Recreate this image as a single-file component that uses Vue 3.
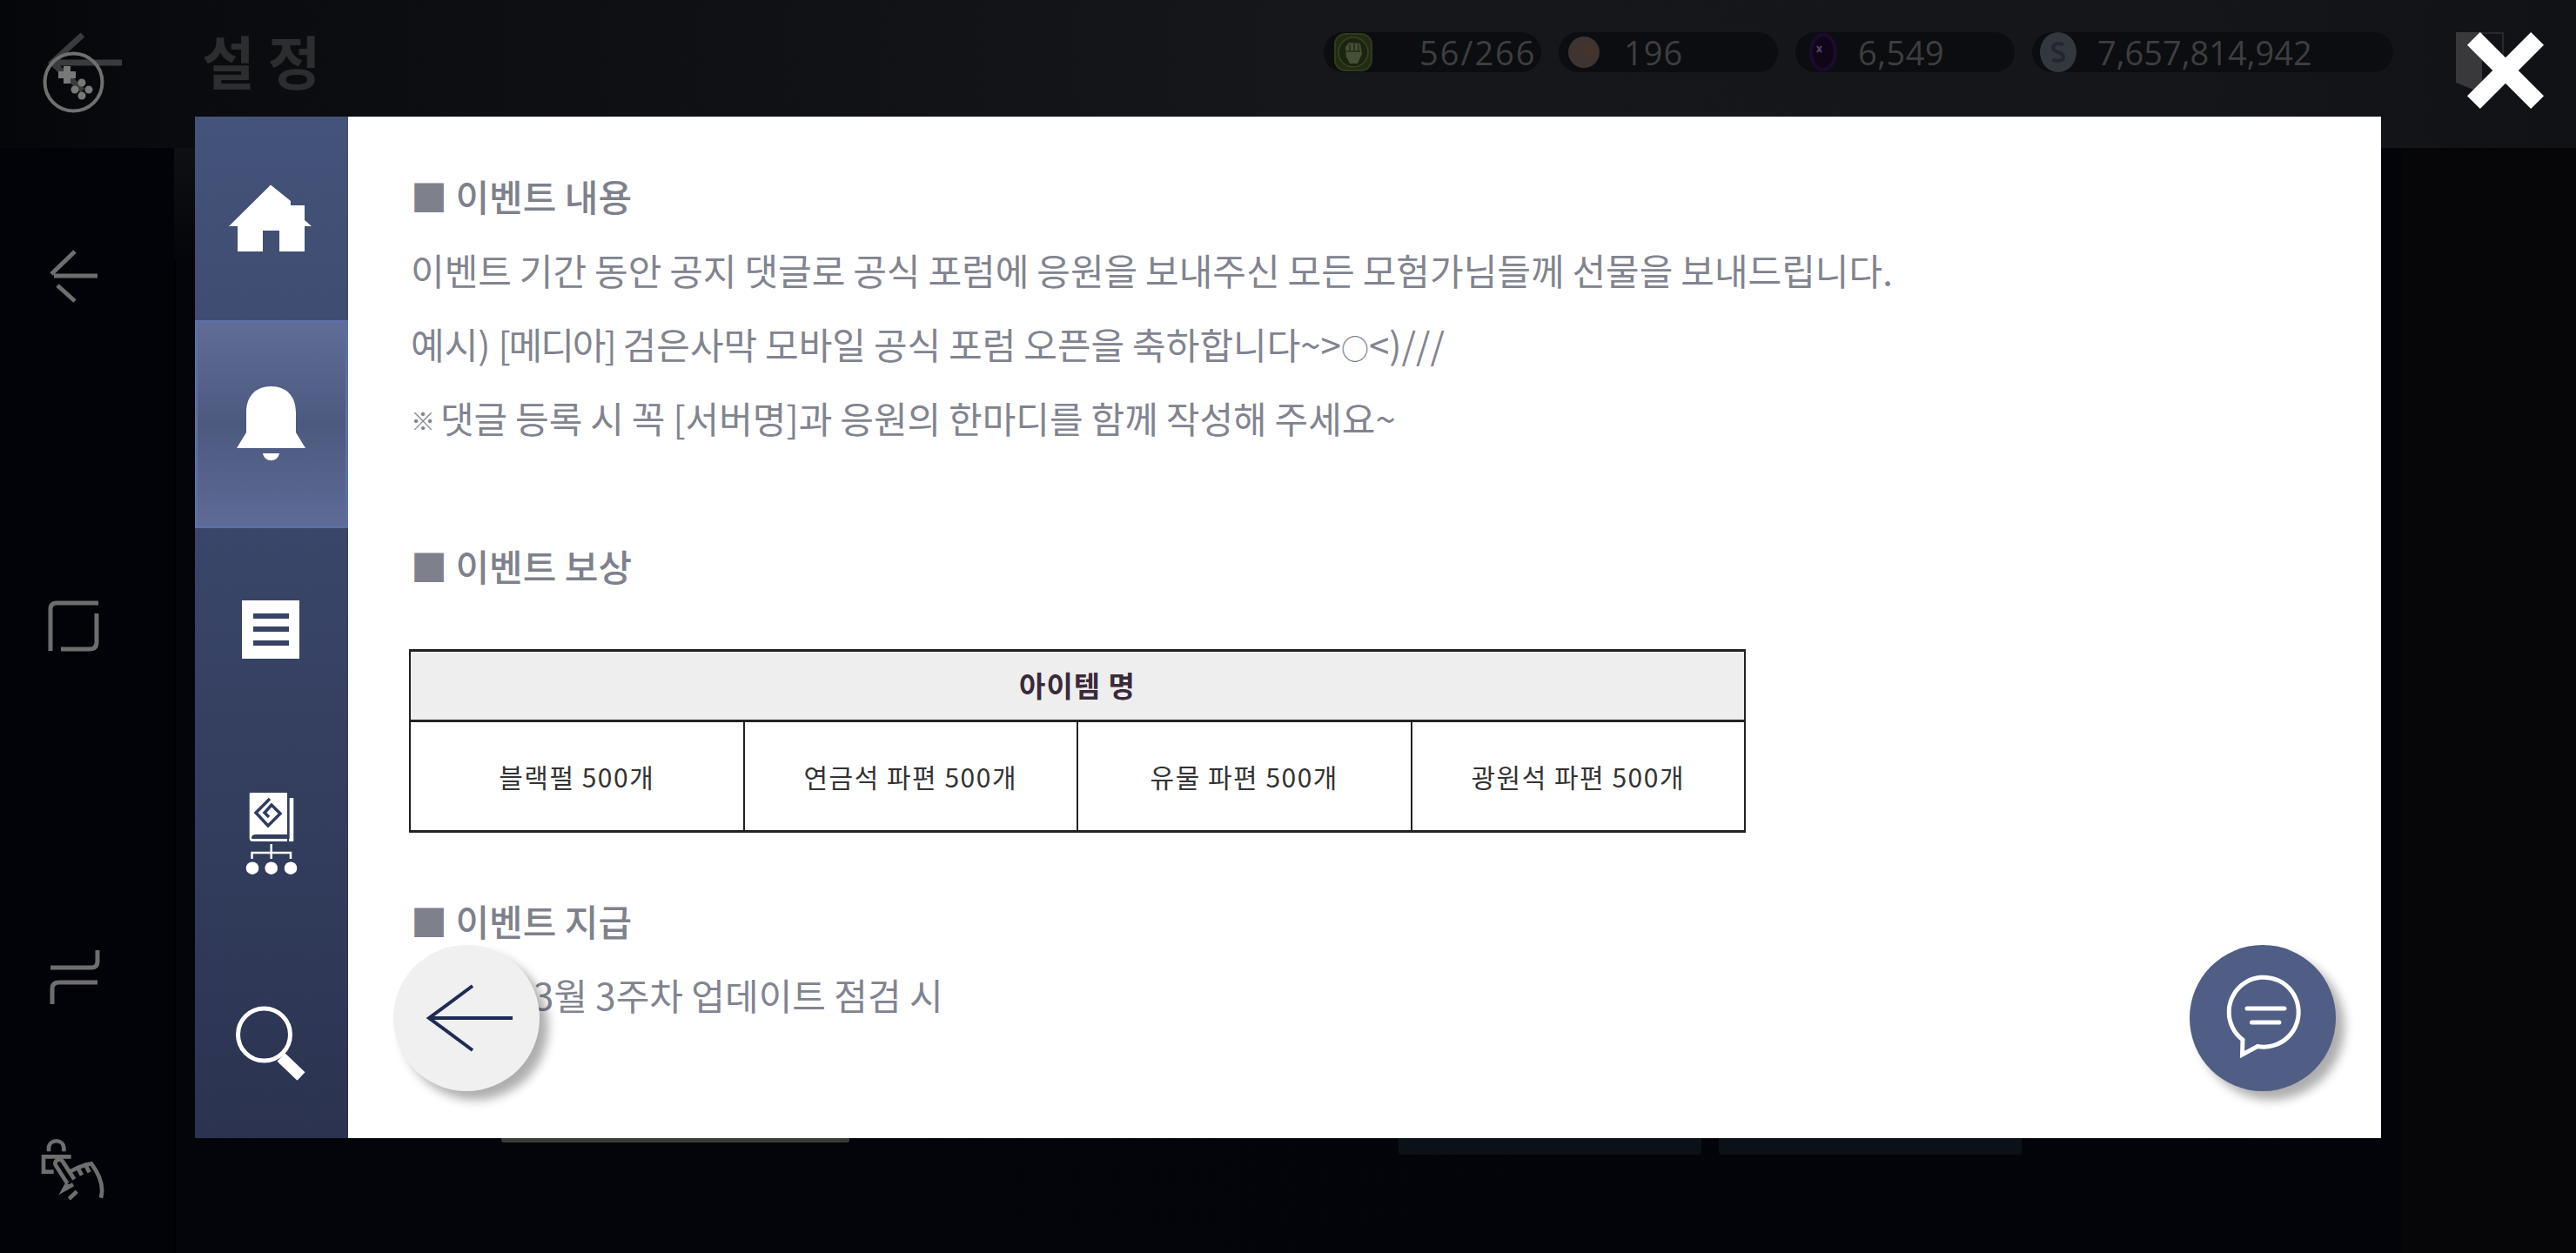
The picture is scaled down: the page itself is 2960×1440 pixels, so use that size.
<script setup>
const pills = [
  { label: '56/266', width: 250, textAt: 110, iconAt: 12, icon: 'fist', spacing: 2 },
  { label: '196', width: 252, textAt: 75, iconAt: 11, icon: 'stone', spacing: 1 },
  { label: '6,549', width: 252, textAt: 72, iconAt: 16, icon: 'orb', spacing: 0.5 },
  { label: '7,657,814,942', width: 415, textAt: 75, iconAt: 9, icon: 'coin', spacing: 0 },
];

const rewards = ['블랙펄 500개', '연금석 파편 500개', '유물 파편 500개', '광원석 파편 500개'];
</script>

<template>
  <div class="screen">
    <!-- dimmed game screen behind the notice -->
    <header class="topbar">
      <svg class="top-back" width="90" height="90" viewBox="0 0 90 90" fill="none">
        <path d="M5 45H85M40 13L5 45L40 77" stroke="#3a3b3d" stroke-width="7" />
      </svg>
      <div class="title">설 정</div>
      <div class="pills">
        <div v-for="p in pills" :key="p.icon" class="pill" :style="{ width: p.width + 'px' }">
          <div class="pill-icon" :style="{ width: p.textAt + 'px', paddingLeft: p.iconAt + 'px' }">
            <svg v-if="p.icon === 'fist'" width="44" height="44" viewBox="0 0 44 44">
              <rect x="1" y="1" width="42" height="42" rx="12" fill="#222b13" stroke="#303b1b" stroke-width="2" />
              <circle cx="22" cy="22" r="17" fill="#1c2410" stroke="#38431f" stroke-width="1.500" />
              <path d="M13 16L17 11L30 12L32 24L27 35H18L14 27Z" fill="#465038" />
              <path d="M18 13V20M23 12V20M28 13V20M14 21H30" stroke="#222b13" stroke-width="1.500" fill="none" />
            </svg>
            <svg v-else-if="p.icon === 'stone'" width="36" height="36" viewBox="0 0 36 36">
              <circle cx="18" cy="18" r="18" fill="#3e3533" />
              <circle cx="23" cy="16" r="8" fill="#47332c" />
            </svg>
            <svg v-else-if="p.icon === 'orb'" width="32" height="44" viewBox="0 0 32 44">
              <ellipse cx="16" cy="22" rx="16" ry="22" fill="#1c0b30" />
              <ellipse cx="16" cy="22" rx="12" ry="18" fill="#100618" />
              <path d="M9 15l5 7M14 15l-5 7" stroke="#5b4470" stroke-width="2" />
            </svg>
            <svg v-else width="42" height="46" viewBox="0 0 42 46">
              <ellipse cx="21" cy="23" rx="21" ry="23" fill="#33383f" />
              <path d="M27 15c-3-3-12-3-12 3s12 4 12 10-9 6-12 3" fill="none" stroke="#23272d" stroke-width="4" />
            </svg>
          </div>
          <span class="pill-text" :style="{ letterSpacing: p.spacing + 'px' }">{{ p.label }}</span>
        </div>
      </div>
      <svg class="bookmark" width="55" height="70" viewBox="0 0 55 70">
        <path d="M0 0H30V70L0 58Z" fill="#39393b" />
        <path d="M30 1H54V50" fill="none" stroke="#29292b" stroke-width="2" />
      </svg>
    </header>

    <main class="body">
      <div class="stub-row">
        <div class="stub-grey"></div>
        <div class="stub-tab first"></div>
        <div class="stub-tab"></div>
      </div>
    </main>

    <!-- device nav rail, sits over the game -->
    <nav class="rail">
      <svg class="rail-btn pad" width="80" height="80" viewBox="0 0 80 80" fill="none">
        <circle cx="39.5" cy="40.5" r="33" stroke="#707070" stroke-width="4" />
        <path d="M32 22V42M22 32H42" stroke="#787878" stroke-width="8" />
        <circle cx="49" cy="41" r="4.5" fill="#787878" />
        <circle cx="57" cy="49" r="4.5" fill="#787878" />
        <circle cx="41" cy="49" r="4.5" fill="#787878" />
        <circle cx="49" cy="56" r="4.5" fill="#787878" />
      </svg>
      <svg class="rail-btn back" width="80" height="80" viewBox="0 0 80 80" fill="none">
        <path d="M17 40H67M41 12L14 38M21 51L41 69" stroke="#6e6e6e" stroke-width="5" />
      </svg>
      <svg class="rail-btn" width="80" height="80" viewBox="0 0 80 80" fill="none">
        <path d="M68 13H20Q13 13 13 20V68M66 25V58Q66 66 58 66H25" stroke="#6e6e6e" stroke-width="5" />
      </svg>
      <svg class="rail-btn" width="80" height="80" viewBox="0 0 80 80" fill="none">
        <path d="M67 9V22Q67 29 60 29H13M67 46H23Q15 46 15 53V71" stroke="#6e6e6e" stroke-width="5" />
      </svg>
      <svg class="rail-btn hand" width="80" height="80" viewBox="60 69 240 240" fill="none">
        <path
          d="M108 130V120C108 85 160 85 160 120V130M185 148H90V200H125M132 178C124 162 146 150 156 164L196 226M132 178L172 240M180 200L208 186L222 212M208 186L235 176L248 202M235 176L255 172C280 205 300 245 288 290M172 240L160 262L192 244M178 293L205 268"
          stroke="#6e6e6e"
          stroke-width="14"
        />
      </svg>
    </nav>

    <section class="notice">
      <aside class="side">
        <div class="side-item">
          <svg width="120" height="120" viewBox="0 0 120 120">
            <path fill="#fff" d="M59 21.5L82 40V45H98V62L106 69H98V98H69V74H50V98H21V69H11Z" />
          </svg>
        </div>
        <div class="side-item active">
          <svg width="120" height="120" viewBox="0 0 120 120">
            <path fill="#fff" d="M59.5 17C42 17 31 28 31 47V70L20 88H99L88 70V47C88 28 77 17 59.5 17Z" />
            <path fill="#fff" d="M50 94H69C67 105 52 105 50 94Z" />
          </svg>
        </div>
        <div class="side-item">
          <svg width="120" height="120" viewBox="0 0 120 120">
            <path
              fill="#fff"
              fill-rule="evenodd"
              d="M26 26H92V93H26ZM39 41V47H80V41ZM39 56V62H80V56ZM39 72V78H80V72Z"
            />
          </svg>
        </div>
        <div class="side-item">
          <svg width="120" height="120" viewBox="0 0 120 120" fill="none">
            <path
              fill="#fff"
              d="M36 13H78V61H42Q37 61 37 65Q37 66 38 66H78V69H38Q34.700 69 34.700 65V14.300Q34.700 13 36 13Z"
            />
            <path fill="#fff" d="M80.700 19H85.300V69H80V66H80.700Z" />
            <path d="M58 20L42 36L56 51L70 37L60 27L52 36L57 41" stroke="#303c62" stroke-width="3.500" />
            <path d="M59.700 72V89M37.500 89V82H82V89" stroke="#fff" stroke-width="2.500" />
            <circle cx="38" cy="99.700" r="7.300" fill="#fff" />
            <circle cx="59.700" cy="99.700" r="7.300" fill="#fff" />
            <circle cx="82" cy="99.700" r="7.300" fill="#fff" />
          </svg>
        </div>
        <div class="side-item">
          <svg width="120" height="120" viewBox="0 0 120 120" fill="none">
            <circle cx="51.500" cy="58" r="30" stroke="#fff" stroke-width="5" />
            <path d="M71 84L94 106" stroke="#fff" stroke-width="13" />
          </svg>
        </div>
      </aside>

      <article class="content">
        <p class="head">■ 이벤트 내용</p>
        <p class="tight">이벤트 기간 동안 공지 댓글로 공식 포럼에 응원을 보내주신 모든 모험가님들께 선물을 보내드립니다.</p>
        <p class="tight">예시) <span class="squeeze">[메디아]</span> 검은사막 모바일 공식 포럼 오픈을 축하합니다~&gt;<span class="ring">○</span>&lt;)///</p>
        <p class="tight"><span class="mark">※</span> 댓글 등록 시 꼭 [서버명]과 응원의 한마디를 함께 작성해 주세요~</p>
        <p class="blank"></p>
        <p class="head">■ 이벤트 보상</p>

        <table class="rewards">
          <thead>
            <tr>
              <th colspan="4">아이템 명</th>
            </tr>
          </thead>
          <tbody>
            <tr>
              <td v-for="r in rewards" :key="r">{{ r }}</td>
            </tr>
          </tbody>
        </table>

        <p class="head">■ 이벤트 지급</p>
        <p class="pay-date">3월 3주차 업데이트 점검 시</p>
      </article>

      <button class="fab fab-back">
        <svg width="168" height="168" viewBox="0 0 168 168" fill="none">
          <path d="M41 84H137M91 47L41 84L91 121" stroke="#1f2c55" stroke-width="4" />
        </svg>
      </button>
      <button class="fab fab-chat">
        <svg width="168" height="168" viewBox="0 0 168 168" fill="none">
          <path d="M61 109L60.500 126L78 116.500A40 40 0 1 0 61 109Z" stroke="#fff" stroke-width="5" />
          <path d="M66 73H109M71.500 89H103" stroke="#fff" stroke-width="5" stroke-linecap="round" />
        </svg>
      </button>
    </section>

    <svg class="close" width="120" height="120" viewBox="0 0 120 120" fill="none">
      <path d="M23.400 23.400L96.600 96.600M96.600 23.400L23.400 96.600" stroke="#fff" stroke-width="21" />
    </svg>
  </div>
</template>

<style scoped>
.screen {
  position: relative;
  width: 2960px;
  height: 1440px;
  overflow: hidden;
  display: flex;
  flex-direction: column;
  background: #03040a;
  font-family: "Noto Sans CJK KR", "Noto Sans", sans-serif;
}
.topbar {
  display: flex;
  align-items: center;
  height: 120px;
  padding: 0 83px 50px 55px;
  flex-shrink: 0;
  background: linear-gradient(90deg, #050609 0, #0a0b0e 200px, #15171b 1500px, #15161a 2500px, #111215 100%);
}
.top-back {
  margin-top: 24px;
}
.title {
  margin-left: 87px;
  margin-top: 16px;
  font-size: 66px;
  font-weight: 700;
  color: #2c2d2f;
  line-height: 1;
  white-space: nowrap;
}
.pills {
  display: flex;
  gap: 20px;
  margin-left: auto;
  margin-right: 72px;
}
.pill {
  display: flex;
  align-items: center;
  height: 46px;
  border-radius: 23px;
  background: #0c0d10;
}
.pill-icon {
  display: flex;
  align-items: center;
  box-sizing: border-box;
  flex-shrink: 0;
}
.pill-text {
  font-family: "Open Sans", "Noto Sans", sans-serif;
  font-size: 38px;
  color: #3e3e40;
  line-height: 46px;
  white-space: nowrap;
}
.bookmark {
  margin-top: 24px;
  flex-shrink: 0;
}
.body {
  flex: 1;
  display: flex;
  flex-direction: column;
  justify-content: flex-end;
  padding-bottom: 113px;
  background:
    linear-gradient(180deg, #0e1014, #04050a) no-repeat 200px 0 / 24px 130px,
    linear-gradient(90deg, #020308 0, #020308 200px, #000 200px, #000 202px, #04050a 202px, #03040a 2759px, #060608 2760px);
}
.stub-row {
  display: flex;
  align-items: flex-start;
  padding-left: 576px;
  height: 40px;
}
.stub-grey {
  width: 400px;
  height: 26px;
  background: #3a3a3a;
  border-radius: 0 0 3px 3px;
}
.stub-tab {
  width: 348px;
  height: 40px;
  margin-left: 20px;
  background: #0c1118;
  border-radius: 0 0 4px 4px;
}
.stub-tab.first {
  margin-left: 631px;
}
.rail {
  position: absolute;
  left: 0;
  top: 0;
  bottom: 0;
  width: 200px;
  box-sizing: border-box;
  padding: 54px 0 0 45px;
  display: flex;
  flex-direction: column;
  align-items: flex-start;
}
.rail-btn {
  flex-shrink: 0;
  margin-top: 323px;
}
.rail-btn.pad {
  margin-top: 0;
}
.rail-btn.back {
  margin-top: 143px;
}
.rail-btn.hand {
  margin-top: 140px;
  margin-left: -5px;
}
.notice {
  position: absolute;
  left: 224px;
  top: 134px;
  width: 2512px;
  height: 1174px;
  display: flex;
  overflow: hidden;
  background: #fff;
}
.side {
  width: 176px;
  flex-shrink: 0;
  display: flex;
  flex-direction: column;
  background: linear-gradient(180deg, #44537a 0, #2b3350 100%);
}
.side-item {
  flex: 1;
  display: flex;
  align-items: center;
  justify-content: center;
  box-sizing: border-box;
}
.side-item.active {
  border: 3px solid #5b70a5;
  background: linear-gradient(180deg, #5f6d97 0, #4c597f 50%, #5d6b96 100%);
}
.content {
  flex: 1;
  padding: 48px 0 0 72px;
  color: #81848f;
  font-size: 42px;
  line-height: 85px;
}
.content p {
  margin: 0;
  white-space: nowrap;
  height: 85px;
}
.content .tight {
  word-spacing: -0.5px;
}
.squeeze {
  letter-spacing: -2px;
}
.ring {
  font-size: 32px;
  line-height: 1;
}
.mark {
  font-size: 28px;
  letter-spacing: -3px;
  line-height: 1;
  vertical-align: 3px;
}
.content .head {
  font-weight: 500;
  color: #7e818c;
}
.content .pay-date {
  padding-left: 141px;
}
.rewards {
  width: 1536px;
  margin: 54px 0 58px -2px;
  border-collapse: collapse;
  table-layout: fixed;
  color: #333;
  font-size: 30px;
  line-height: 1.2;
}
.rewards th,
.rewards td {
  border: 2px solid #222;
  text-align: center;
  padding: 0;
}
.rewards th {
  height: 78px;
  background: #eee;
  font-size: 33px;
  font-weight: 700;
  letter-spacing: 1px;
  color: #3a2a3a;
  border-width: 3px 2px;
}
.rewards td {
  height: 124px;
  letter-spacing: 1.5px;
  border-bottom-width: 3px;
}
.fab {
  position: absolute;
  top: 952px;
  width: 168px;
  height: 168px;
  padding: 0;
  border: none;
  border-radius: 50%;
  box-shadow: 10px 10px 12px rgba(0, 0, 0, 0.32);
}
.fab svg {
  display: block;
}
.fab-back {
  left: 228px;
  background: #f0f0f0;
}
.fab-chat {
  left: 2292px;
  background: #505d85;
}
.close {
  position: absolute;
  left: 2819px;
  top: 21px;
}
</style>

<style>
html,
body {
  margin: 0;
  background: #03040a;
}
</style>
